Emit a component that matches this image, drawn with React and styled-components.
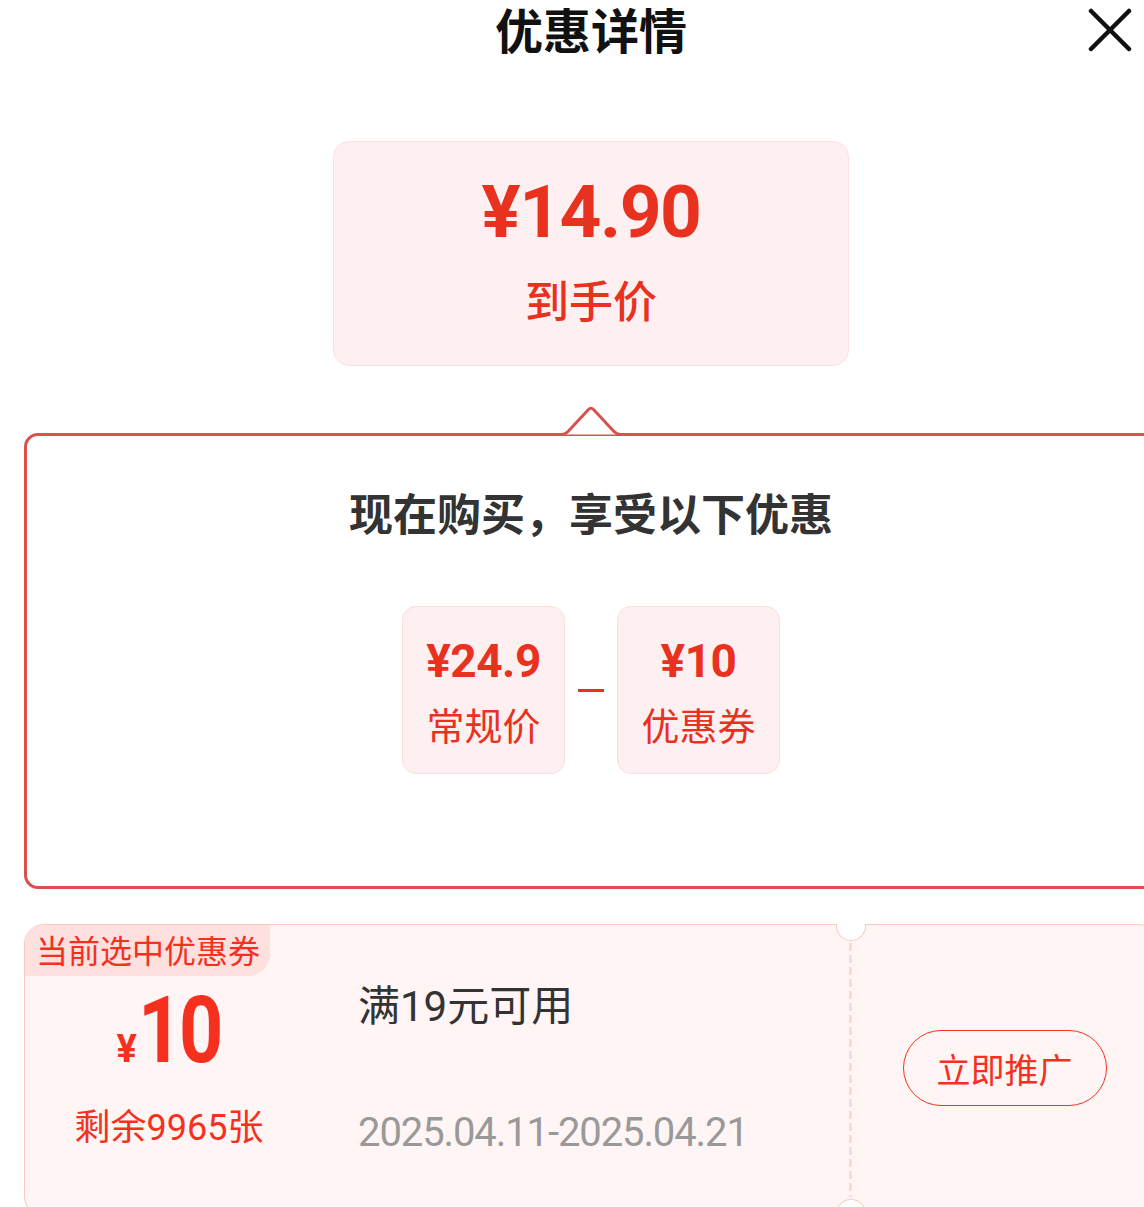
import React from 'react';
import styled, { createGlobalStyle } from 'styled-components';

const RED = '#e8311f';
const COUPON_RED = '#f5301e';
const CJK = '"Noto Sans CJK SC", "Noto Sans", sans-serif';
const NUM = 'Roboto, "Noto Sans CJK SC", sans-serif';

const GlobalStyle = createGlobalStyle`
  html, body {
    margin: 0;
    padding: 0;
    background: #fff;
    overflow: hidden;
  }
  body {
    font-family: ${CJK};
  }
`;

function CloseIcon() {
  return (
    <svg width="44" height="44" viewBox="0 0 44 44">
      <path d="M3 3 L41 41 M41 3 L3 41" stroke="#111" strokeWidth="4.5" strokeLinecap="round" />
    </svg>
  );
}

function Notch() {
  return (
    <NotchSvg width="80" height="32" viewBox="0 0 80 32">
      <path
        d="M0 28.5 H 10 Q 14 28.5 17 25.5 L 37.5 3.5 Q 40 1 42.5 3.5 L 63 25.5 Q 66 28.5 70 28.5 H 80"
        fill="#fff"
        stroke="#d9504c"
        strokeWidth="3"
      />
    </NotchSvg>
  );
}

function PriceChip({ amount, label }) {
  return (
    <Chip>
      <ChipAmount>{amount}</ChipAmount>
      <ChipLabel>{label}</ChipLabel>
    </Chip>
  );
}

export default function App() {
  return (
    <>
      <GlobalStyle />
      <Page>
        <Header>
          <Title>优惠详情</Title>
          <CloseButton>
            <CloseIcon />
          </CloseButton>
        </Header>

        <FinalPrice>
          <FinalAmount>¥14.90</FinalAmount>
          <FinalLabel>到手价</FinalLabel>
        </FinalPrice>

        <Callout>
          <Notch />
          <CalloutTitle>现在购买，享受以下优惠</CalloutTitle>
          <Formula>
            <PriceChip amount="¥24.9" label="常规价" />
            <Minus />
            <PriceChip amount="¥10" label="优惠券" />
          </Formula>
        </Callout>

        <Coupon>
          <CouponTag>当前选中优惠券</CouponTag>
          <CouponValue>
            <ValueLine>
              <Yen>¥</Yen>
              <BigValue>10</BigValue>
            </ValueLine>
            <Remain>剩余9965张</Remain>
          </CouponValue>
          <CouponInfo>
            <Condition>满19元可用</Condition>
            <Validity>2025.04.11-2025.04.21</Validity>
          </CouponInfo>
          <Perforation />
          <CouponAction>
            <PromoteButton>立即推广</PromoteButton>
          </CouponAction>
        </Coupon>
      </Page>
    </>
  );
}

const Page = styled.div`
  width: 1182px;
  box-sizing: border-box;
  padding: 0 24px;
  display: flex;
  flex-direction: column;
  align-items: stretch;
`;

const Header = styled.div`
  position: relative;
  height: 56px;
  display: flex;
  align-items: center;
  justify-content: center;
`;

const Title = styled.div`
  font-family: ${CJK};
  font-size: 48px;
  font-weight: 700;
  line-height: 56px;
  color: #111;
`;

const CloseButton = styled.div`
  position: absolute;
  right: 26px;
  top: 8px;
  width: 44px;
  height: 44px;
`;

const FinalPrice = styled.div`
  align-self: center;
  margin-top: 85px;
  width: 516px;
  height: 225px;
  box-sizing: border-box;
  background: #fef0f0;
  border: 1px solid #fde1e1;
  border-radius: 16px;
  display: flex;
  flex-direction: column;
  align-items: center;
  padding-top: 30px;
`;

const FinalAmount = styled.div`
  font-family: ${NUM};
  font-size: 73px;
  font-weight: 700;
  line-height: 80px;
  color: ${RED};
  letter-spacing: -1.5px;
`;

const FinalLabel = styled.div`
  margin-top: 20px;
  font-family: ${CJK};
  font-size: 44px;
  font-weight: 500;
  line-height: 54px;
  color: ${RED};
`;

const Callout = styled.div`
  position: relative;
  margin-top: 67px;
  height: 456px;
  box-sizing: border-box;
  border: 3px solid #d9504c;
  border-radius: 14px;
  display: flex;
  flex-direction: column;
  align-items: center;
  padding-top: 46px;
`;

const NotchSvg = styled.svg`
  position: absolute;
  left: 50%;
  top: -30px;
  transform: translateX(-50%);
`;

const CalloutTitle = styled.div`
  font-family: ${CJK};
  font-size: 44px;
  font-weight: 700;
  line-height: 60px;
  color: #333;
`;

const Formula = styled.div`
  margin-top: 64px;
  display: flex;
  align-items: center;
  gap: 13px;
`;

const Chip = styled.div`
  width: 163px;
  height: 168px;
  box-sizing: border-box;
  background: #fef0f0;
  border: 1px solid #fcdede;
  border-radius: 14px;
  display: flex;
  flex-direction: column;
  align-items: center;
  padding-top: 28px;
`;

const ChipAmount = styled.div`
  font-family: ${NUM};
  font-size: 46px;
  font-weight: 700;
  line-height: 52px;
  color: ${RED};
  letter-spacing: -0.5px;
`;

const ChipLabel = styled.div`
  margin-top: 14px;
  font-family: ${CJK};
  font-size: 38px;
  font-weight: 400;
  line-height: 46px;
  color: ${RED};
`;

const Minus = styled.div`
  width: 26px;
  height: 3px;
  background: ${RED};
`;

const Coupon = styled.div`
  position: relative;
  margin-top: 35px;
  height: 292px;
  box-sizing: border-box;
  background: #fff5f4;
  border: 1px solid #fbc8c1;
  border-radius: 20px;
  display: grid;
  grid-template-columns: 292px 1fr 3px 305px;
`;

const CouponTag = styled.div`
  position: absolute;
  left: 0;
  top: 0;
  height: 51px;
  padding: 0 10px 0 11px;
  background: #fee0df;
  border-radius: 19px 0 22px 0;
  font-family: ${CJK};
  font-size: 32px;
  line-height: 48px;
  color: ${COUPON_RED};
`;

const CouponValue = styled.div`
  display: flex;
  flex-direction: column;
  align-items: center;
  padding-top: 60px;
  padding-right: 4px;
`;

const ValueLine = styled.div`
  display: flex;
  align-items: baseline;
  color: ${COUPON_RED};
  font-family: ${NUM};
  font-weight: 700;
  line-height: 92px;
`;

const Yen = styled.span`
  font-size: 38px;
  margin-right: 1px;
`;

const BigValue = styled.span`
  display: inline-block;
  font-size: 92px;
  letter-spacing: -4px;
  transform: scaleX(0.84);
  transform-origin: left center;
  margin-right: -14px;
`;

const Remain = styled.div`
  margin-top: 12px;
  font-family: ${NUM};
  font-size: 36px;
  line-height: 42px;
  color: ${COUPON_RED};
`;

const CouponInfo = styled.div`
  display: flex;
  flex-direction: column;
  padding-left: 41px;
  padding-top: 57px;
`;

const Condition = styled.div`
  font-family: ${NUM};
  font-size: 42px;
  line-height: 50px;
  color: #333;
`;

const Validity = styled.div`
  margin-top: 77px;
  font-family: ${NUM};
  font-size: 40px;
  line-height: 48px;
  color: #999;
  letter-spacing: -1.1px;
`;

const Perforation = styled.div`
  position: relative;
  margin: 18px 0;
  background: repeating-linear-gradient(to bottom, #fcd9d5 0 8px, transparent 8px 12px);

  &::before,
  &::after {
    content: '';
    position: absolute;
    left: 50%;
    width: 30px;
    height: 17px;
    margin-left: -15px;
    background: #fff;
    border: 1px solid #fbc8c1;
    box-sizing: border-box;
  }
  &::before {
    top: -19px;
    border-top: none;
    border-radius: 0 0 15px 15px;
  }
  &::after {
    bottom: -19px;
    border-bottom: none;
    border-radius: 15px 15px 0 0;
  }
`;

const CouponAction = styled.div`
  display: flex;
  align-items: center;
  justify-content: center;
  padding-bottom: 4px;
`;

const PromoteButton = styled.div`
  width: 204px;
  height: 76px;
  box-sizing: border-box;
  border: 1.5px solid ${COUPON_RED};
  border-radius: 38px;
  display: flex;
  align-items: center;
  justify-content: center;
  font-family: ${CJK};
  font-size: 34px;
  color: ${COUPON_RED};
`;
